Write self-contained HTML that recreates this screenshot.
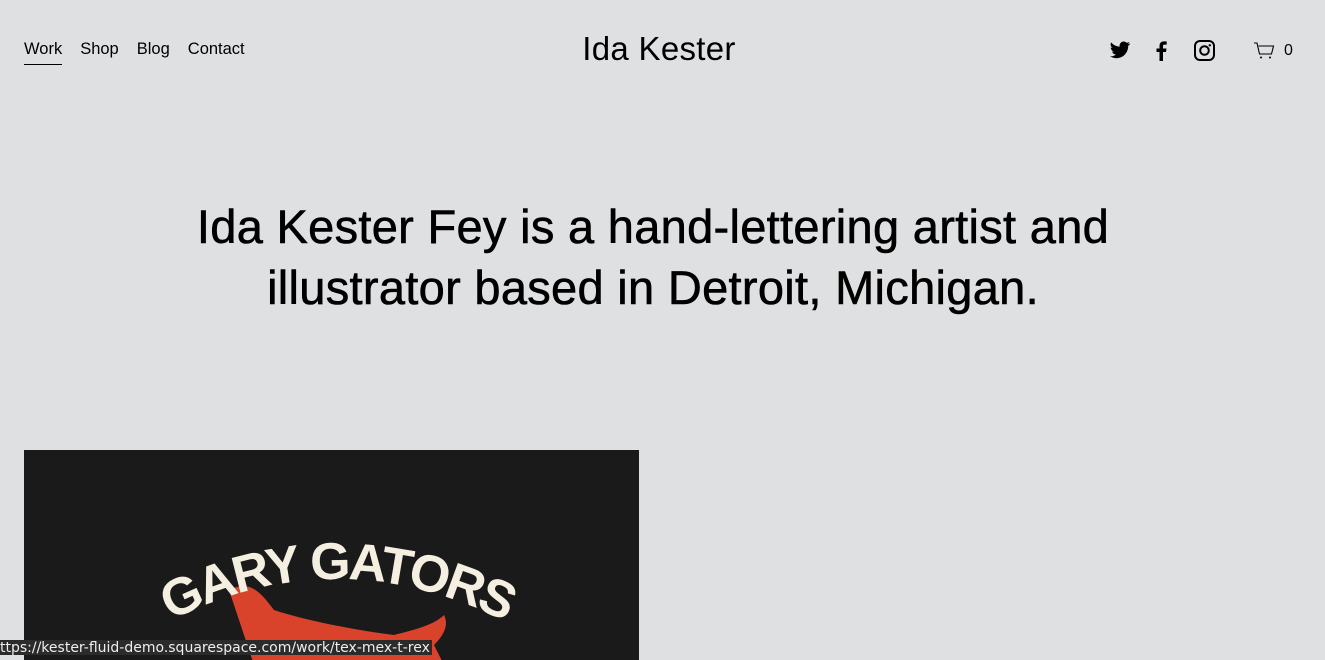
<!DOCTYPE html>
<html><head><meta charset="utf-8"><style>
*{margin:0;padding:0;box-sizing:border-box}
body{width:1325px;height:655px;overflow:hidden;background:#dfe0e2;font-family:"Liberation Sans",sans-serif;color:#000;position:relative}
.nav{position:absolute;top:40px;left:24px;font-size:16.5px;display:flex;gap:18px}
.nav span.a{border-bottom:1px solid #000;padding-bottom:5px}
.logo{position:absolute;top:30px;left:0;width:1318px;text-align:center;font-size:33px;letter-spacing:.3px}
.icons{position:absolute;top:38px;left:1108px}
h1{position:absolute;top:196px;left:0;width:1306px;text-align:center;font-weight:normal;font-size:47px;line-height:61px;letter-spacing:.3px;-webkit-text-stroke:.6px #000}
.img{position:absolute;left:24px;top:450px;width:615px;height:210px;background:#1a1a1a;overflow:hidden}
.status{position:absolute;left:0;top:640px;height:15px;width:432px;background:#2b2b2b;color:#eee;font-size:14px;line-height:17px;white-space:nowrap;overflow:hidden;font-family:"DejaVu Sans","Liberation Sans",sans-serif}
</style></head><body>
<div class="nav"><span class="a">Work</span><span>Shop</span><span>Blog</span><span>Contact</span></div>
<div class="logo">Ida Kester</div>
<svg class="icons" width="190" height="24" viewBox="0 0 190 24">
<path d="M22 4.5c-.8.4-1.6.6-2.4.7.9-.5 1.5-1.3 1.8-2.300-.8.5-1.7.8-2.6 1-1.6-1.7-4.3-1.8-6-.2-1.1 1-1.5 2.6-1.2 4-3.3-.2-6.3-1.7-8.4-4.3-1.1 1.9-.5 4.3 1.3 5.5-.6 0-1.3-.2-1.8-.5 0 2 1.4 3.7 3.3 4.1-.6.2-1.2.2-1.9.1.5 1.7 2.1 2.9 3.9 2.9-1.7 1.4-3.9 2.1-6.1 1.8 1.9 1.2 4.1 1.9 6.4 1.9 7.7 0 11.9-6.4 11.9-11.9v-.5c.8-.6 1.5-1.3 2-2.2z" fill="#000" transform="translate(0,1)"/>
<path d="M55 23v-9h3l.5-3.5H55V8.3c0-1 .3-1.7 1.8-1.7h1.9V3.5c-.3 0-1.4-.1-2.7-.1-2.7 0-4.5 1.6-4.5 4.6v2.5h-3V14h3v9z" fill="#000"/>
<rect x="87" y="3" width="19" height="19" rx="5" fill="none" stroke="#000" stroke-width="2"/>
<circle cx="96.5" cy="12.5" r="4.3" fill="none" stroke="#000" stroke-width="2"/>
<circle cx="101.8" cy="7.3" r="1.2" fill="#000"/>
<path d="M146 5h3l2.5 11h12l2-8h-15" fill="none" stroke="#000" stroke-width="1.1"/>
<circle cx="153" cy="19.5" r="1" fill="#000"/><circle cx="162" cy="19.5" r="1" fill="#000"/>
<text x="176" y="17" font-family="Liberation Sans" font-size="16" fill="#000">0</text>
</svg>
<h1>Ida Kester Fey is a hand-lettering artist and<br>illustrator based in Detroit, Michigan.</h1>
<div class="img">
<svg width="615" height="210">
<defs><path id="arc" d="M152 168 Q312 90 474 168"/></defs>
<path d="M205 140c20-10 30 0 45 20 30 10 80 20 120 25 20-5 40-10 50-20 5 10 0 20-10 30L420 215H230z" fill="#d9432c"/>
<text font-family="Liberation Sans" font-weight="bold" font-size="52" fill="#f4efe0" letter-spacing="-3"><textPath href="#arc" startOffset="50%" text-anchor="middle">GARY GATORS</textPath></text>
</svg>
</div>
<div class="status">ttps://kester-fluid-demo.squarespace.com/work/tex-mex-t-rex</div>
</body></html>
